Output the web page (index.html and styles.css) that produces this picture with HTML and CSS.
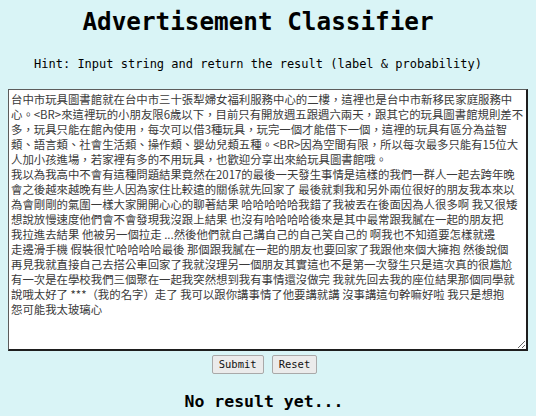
FILE: index.html
```html
<!DOCTYPE html>
<html lang="zh-Hant">
<head>
<meta charset="utf-8">
<title>Advertisement Classifier</title>
<link rel="stylesheet" href="styles.css">
</head>
<body>
<main class="app">
  <header class="head">
    <h1 class="title">Advertisement Classifier</h1>
    <p class="hint">Hint: Input string and return the result (label &amp; probability)</p>
  </header>
  <form class="form">
    <textarea class="input" spellcheck="false">台中市玩具圖書館就在台中市三十張犁婦女福利服務中心的二樓，這裡也是台中市新移民家庭服務中
心。&lt;BR&gt;來這裡玩的小朋友限6歲以下，目前只有開放週五跟週六兩天，跟其它的玩具圖書館規則差不
多，玩具只能在館內使用，每次可以借3種玩具，玩完一個才能借下一個，這裡的玩具有區分為益智
類、語言類、社會生活類、操作類、嬰幼兒類五種。&lt;BR&gt;因為空間有限，所以每次最多只能有15位大
人加小孩進場，若家裡有多的不用玩具，也歡迎分享出來給玩具圖書館哦。
我以為我高中不會有這種問題結果竟然在2017的最後一天發生事情是這樣的我們一群人一起去跨年晚
會之後越來越晚有些人因為家住比較遠的關係就先回家了 最後就剩我和另外兩位很好的朋友我本來以
為會剛剛的氣圍一樣大家開開心心的聊著結果 哈哈哈哈哈我錯了我被丟在後面因為人很多啊 我又很矮
想說放慢速度他們會不會發現我沒跟上結果 也沒有哈哈哈哈後來是其中最常跟我膩在一起的朋友把
我拉進去結果 他被另一個拉走 ...然後他們就自己講自己的自己笑自己的 啊我也不知道要怎樣就邊
走邊滑手機 假裝很忙哈哈哈哈最後 那個跟我膩在一起的朋友也要回家了我跟他來個大擁抱 然後說個
再見我就直接自己去搭公車回家了我就沒理另一個朋友其實這也不是第一次發生只是這次真的很尷尬
有一次是在學校我們三個聚在一起我突然想到我有事情還沒做完 我就先回去我的座位結果那個同學就
說哦太好了 ***（我的名字）走了 我可以跟你講事情了他要講就講 沒事講這句幹嘛好啦 我只是想抱
怨可能我太玻璃心</textarea>
    <div class="actions">
      <button type="button" class="btn">Submit</button>
      <button type="reset" class="btn">Reset</button>
    </div>
  </form>
  <h2 class="result">No result yet...</h2>
</main>
</body>
</html>
```

FILE: styles.css
```css
html, body {
  background: #d9f4f6;
}
body {
  margin: 8px;
  font-family: "DejaVu Sans Mono", "Liberation Mono", monospace;
  color: #000;
}
.app {
  display: flex;
  flex-direction: column;
  align-items: flex-start;
}
.head {
  width: 500px;
  display: flex;
  flex-direction: column;
  align-items: center;
}
.title {
  margin: 0;
  font-size: 24.3px;
  line-height: 28px;
  font-weight: bold;
}
.hint {
  margin: 21px 0 0;
  font-size: 12px;
  line-height: 14px;
}
.form {
  width: 520px;
  margin-top: 18px;
  display: flex;
  flex-direction: column;
  align-items: center;
}
.input {
  display: block;
  box-sizing: border-box;
  width: 520px;
  height: 262px;
  margin: 0;
  padding: 2px 0 2px 2px;
  border-style: solid;
  border-width: 1px 2px 2px 1px;
  border-color: #5c5c5c #1e1e1e #1e1e1e #5c5c5c;
  background: #fff;
  color: #3a3a3a;
  font-family: "Noto Sans CJK TC", "Noto Sans", sans-serif;
  font-size: 11.4px;
  line-height: 15px;
  overflow: hidden;
  white-space: pre-wrap;
  outline: none;
}
.actions {
  margin-top: 4px;
  padding-right: 7px;
  display: flex;
  gap: 8px;
}
.btn {
  box-sizing: border-box;
  height: 19px;
  margin: 0;
  padding: 0 6px;
  border: 1px solid #a9a9a9;
  border-radius: 2px;
  background: #ebebeb;
  color: #111;
  font-family: "DejaVu Sans Mono", monospace;
  font-size: 10.5px;
  line-height: 17px;
}
.result {
  width: 512px;
  text-align: center;
  margin: 18px 0 0;
  font-size: 16.5px;
  line-height: 19px;
  font-weight: bold;
}
```
